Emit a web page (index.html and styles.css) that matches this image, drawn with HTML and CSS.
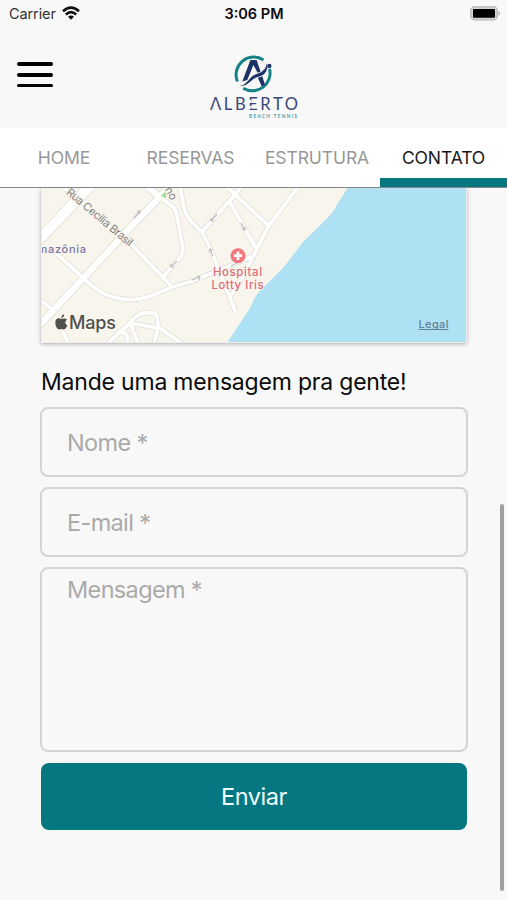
FILE: index.html
```html
<!DOCTYPE html>
<html lang="pt-BR">
<head>
<meta charset="utf-8">
<meta name="viewport" content="width=device-width, initial-scale=1">
<title>Alberto Beach Tennis</title>
<link rel="stylesheet" href="styles.css">
</head>
<body>
<div class="status">
  <div class="carrier"><span>Carrier</span>
    <svg width="18" height="14" viewBox="0 0 18 14"><g fill="none" stroke="#111" stroke-width="2.6"><path d="M1 5.3Q9-2 17 5.3"/><path d="M3.8 8.5Q9 3.8 14.2 8.5"/></g><path d="M6 10.7Q9 8.2 12 10.7L9 13.8Z" fill="#111"/></svg>
  </div>
  <time class="clock">3:06 PM</time>
  <svg class="battery" width="31" height="15" viewBox="0 0 31 15"><rect x=".8" y=".8" width="26.5" height="13" rx="3.8" fill="#d5d5d5" stroke="#b5b5b5" stroke-width="1.2"/><rect x="3" y="3" width="22" height="8.8" rx="1" fill="#000"/><path d="M28.5 4.8Q31.5 7.3 28.5 9.8Z" fill="#aaa"/></svg>
</div>
<header class="header">
  <button class="menu" aria-label="Menu"><i></i><i></i><i></i></button>
  <svg class="logo" width="90" height="66" viewBox="209 53 90 66">
    <g fill="none" stroke="#168184" stroke-width="3">
      <path d="M263.5 60A17.7 17.7 0 0 0 237.4 81.5"/>
      <path d="M269.6 69A17.7 17.7 0 0 1 243.2 88.2"/>
    </g>
    <path d="M242.3 81.5L250.4 60H256.6L265 84.5L261.8 86.5L257.3 76.5L252 79L258 73.5L253.4 65L247.3 80Z" fill="#1d3267"/>
    <path d="M237.8 85.3C248 86 248 75.8 257 73.4C263.6 71.5 265.8 68 266.5 62C269.4 69.5 266 75.5 258.5 77.2C250 79 247.5 89.5 237.8 85.3Z" fill="#1d3267" stroke="#f8f8f8" stroke-width=".9"/>
    <circle cx="269.3" cy="66" r="2.2" fill="#1d3267"/>
    <text class="wordmark" x="210" y="110.3" textLength="88" lengthAdjust="spacing">ALBERTO</text>
    <g fill="#f8f8f8"><path d="M214.1 104.2h3l1 3h-5z"/><rect x="248.5" y="99.9" width="3" height="3"/><rect x="248.5" y="105.8" width="3" height="2.8"/></g>
    <text class="tagline" x="249" y="117.6" textLength="48">BEACH TENNIS</text>
  </svg>
</header>
<nav class="tabs">
  <a class="tab home">HOME</a><a class="tab">RESERVAS</a><a class="tab">ESTRUTURA</a><a class="tab active">CONTATO</a>
</nav>
<main class="content">
  <div class="map">
    <svg width="424" height="154" viewBox="42 188 424 154">
      <defs>
        <g id="narrow"><path d="M62 186L130 243L173 288M161 198L173 207Q176 210 177 216L183 248Q183 255 178 260L164 276M55 252L83 278Q97 291 107 295Q133 305 158 293Q173 286 190 282L227 267L255 255M180 187L184 208Q186 218 202 232L211 250L236 313M202 232L233 197L242 186M227 187L270 227M230 202L255 247M298 187L268 227L244 275L230 297M250 237L257 249M38 298L54 311M62 331L69 344M107 344L130 323Q137 314 143 313H154Q158 314 158 327L184 345M130 323L158 328M130 323L139 345M158 327L154 345M118 333Q131 330 126 345"/></g>
        <g id="wide"><path d="M91 185L38 241"/></g>
        <g id="medium"><path d="M172 184L130 228L36 329M148 187L162 199"/></g>
      </defs>
      <path d="M42 188H466V342H42Z" fill="#f8f5ec"/>
      <g fill="none" stroke-linejoin="round">
        <g stroke="#dfddd8"><use href="#narrow" stroke-width="5.2"/><use href="#medium" stroke-width="8"/><use href="#wide" stroke-width="11.5"/></g>
        <g stroke="#fff"><use href="#narrow" stroke-width="3.8"/><use href="#medium" stroke-width="6.4"/><use href="#wide" stroke-width="10"/></g>
      </g>
      <path d="M348 187L332 213Q329 217 303 242L283 268L258 293Q254 298 250 308L227 343H467V187Z" fill="#aee1f4"/>
      <path d="M161 196L166 191L166 198Z" fill="#9dde8d"/>
      <g fill="none" stroke="#bbb" stroke-width="1.2">
        <path d="M134 218l6-7m-3 0l3 0l0 3M211 221l6-7m-6 4v3h3M171 267l6-6m-6 3v3h3M192 280l8-3m-3-1l3 1l-1 3M241 223l4 7m-3-1l3 1v-3M210 249l3 7m-3-4v-3l3 1M231 266l6-3"/>
      </g>
      <text class="street" transform="translate(65.5 193.5) rotate(40)" textLength="83">Rua Cecília Brasil</text>
      <text class="street" transform="translate(164.5 189.5) rotate(60)">ho</text>
      <text class="district" x="37.5" y="253" textLength="48.5">mazônia</text>
      <circle cx="238" cy="255.7" r="7.5" fill="#f5757f"/>
      <path d="M238 251.5v8.4M233.8 255.7h8.4" stroke="#fff" stroke-width="2.8"/>
      <g class="place"><text x="213" y="276.3" textLength="49">Hospital</text><text x="211.5" y="288.7" textLength="52">Lotty Iris</text></g>
      <g fill="#50504d"><path d="M61.4 318.7c-1.5 0-2.1-.8-3.4-.4-4.1 1.2-3 8.2-.1 10.7 1.3.9 2-.1 3.5-.1s2 1 3.4.2c1.2-.8 2-2.2 2.6-3.7-2.6-1.2-2.7-4.2-.3-5.6-1.7-2.2-4.2-1.1-5.7-1.1Z"/><path d="M61.3 318c-.1-2 1.1-3.3 2.9-3.8.2 1.9-1 3.5-2.9 3.8Z"/></g>
      <text class="maps" x="69" y="329" textLength="47">Maps</text>
      <text class="legal" x="418.5" y="327.6" textLength="30">Legal</text>
      <path d="M418.5 329.5h30" stroke="#648292"/>
    </svg>
  </div>
  <h1 class="title">Mande uma mensagem pra gente!</h1>
  <form class="form">
    <input class="field nome" placeholder="Nome *">
    <input class="field email" placeholder="E-mail *">
    <textarea class="field message" placeholder="Mensagem *"></textarea>
    <button class="send" type="button">Enviar</button>
  </form>
  <div class="scrollbar"></div>
</main>
</body>
</html>
```
FILE: styles.css
```css
* { box-sizing: border-box; }
body {
  margin: 0;
  width: 507px;
  height: 900px;
  overflow: hidden;
  display: flex;
  flex-direction: column;
  background: #f8f8f8;
  font-family: Inter, "Liberation Sans", sans-serif;
  color: #0b0b0b;
}
svg { display: block; }
.status {
  height: 28px;
  display: grid;
  grid-template-columns: 1fr auto 1fr;
  align-items: center;
  padding: 0 6px 1px 9px;
  font-size: 14.5px;
}
.carrier { display: flex; align-items: center; gap: 6px; color: #333; letter-spacing: -.1px; }
.carrier svg { margin-top: -1px; }
.clock { font-weight: 600; margin-right: 2px; }
.battery { justify-self: end; margin-top: -1px; }
.header {
  height: 100px;
  display: grid;
  grid-template-columns: 192px 90px;
  align-items: start;
  padding: 25px 0 0 17px;
}
.menu {
  width: 36px;
  margin-top: 9px;
  padding: 0;
  border: 0;
  background: none;
  display: flex;
  flex-direction: column;
  gap: 7px;
}
.menu i { width: 36px; height: 3.8px; border-radius: 2px; background: #000; }
.wordmark { font: 400 16.5px Lato, sans-serif; fill: #3a477a; }
.tagline { font: 700 4.8px Lato, sans-serif; fill: #4d9b9e; }
.tabs {
  flex: none;
  height: 60px;
  display: grid;
  grid-template-columns: 127px 127px 126px 127px;
  background: #fff;
  border-bottom: 1px solid #858585;
}
.tab {
  display: flex;
  align-items: center;
  justify-content: center;
  font-size: 17.5px;
  letter-spacing: -.1px;
  color: #979797;
  border-bottom: 9px solid transparent;
  padding-top: 8px;
}
.home { padding-left: 1px; }
.active { color: #171717; border-color: #047780; }
.content {
  position: relative;
  flex: 1;
  overflow: hidden;
  padding: 0 40px;
}
.map {
  width: 426px;
  height: 155px;
  border: 1px solid #ededeb;
  border-top: 0;
  margin-left: 1px;
  box-shadow: 0 1px 4px rgba(0, 0, 0, .3);
}
.street { font-size: 11.2px; fill: #85827f; stroke: #f8f5ec; stroke-width: 2px; paint-order: stroke; }
.district { font-size: 11px; font-weight: 500; fill: #7975a4; }
.place { font-size: 11.3px; font-weight: 500; fill: #e06a7b; stroke: #f8f5ec; stroke-width: 1px; paint-order: stroke; }
.maps { font-size: 18px; font-weight: 500; fill: #50504d; }
.legal { font-size: 11px; font-weight: 500; fill: #648292; }
.title {
  margin: 25px 0 10px 1px;
  height: 29px;
  line-height: 29px;
  font-size: 23px;
  font-weight: 400;
  letter-spacing: -.2px;
  white-space: nowrap;
}
.form { display: flex; flex-direction: column; gap: 10px; }
.field {
  width: 428px;
  height: 70px;
  border: 2px solid #d3d3d3;
  border-radius: 8px;
  background: #f8f8f8;
  padding: 0 25px;
  font: 23.5px Inter, "Liberation Sans", sans-serif;
  letter-spacing: -.65px;
  resize: none;
  outline: none;
}
.field::placeholder { color: #aaa; opacity: 1; }
.message { height: 185px; padding-top: 6px; }
.send {
  width: 426px;
  height: 67px;
  margin: 1px 0 0 1px;
  border: 0;
  border-radius: 8px;
  background: #047780;
  color: #f0ffff;
  font: 23.5px Inter, "Liberation Sans", sans-serif;
  letter-spacing: -.45px;
}
.scrollbar {
  position: absolute;
  right: 3px;
  top: 316px;
  width: 4px;
  height: 387px;
  border-radius: 2px;
  background: #a0a0a0;
}
```
